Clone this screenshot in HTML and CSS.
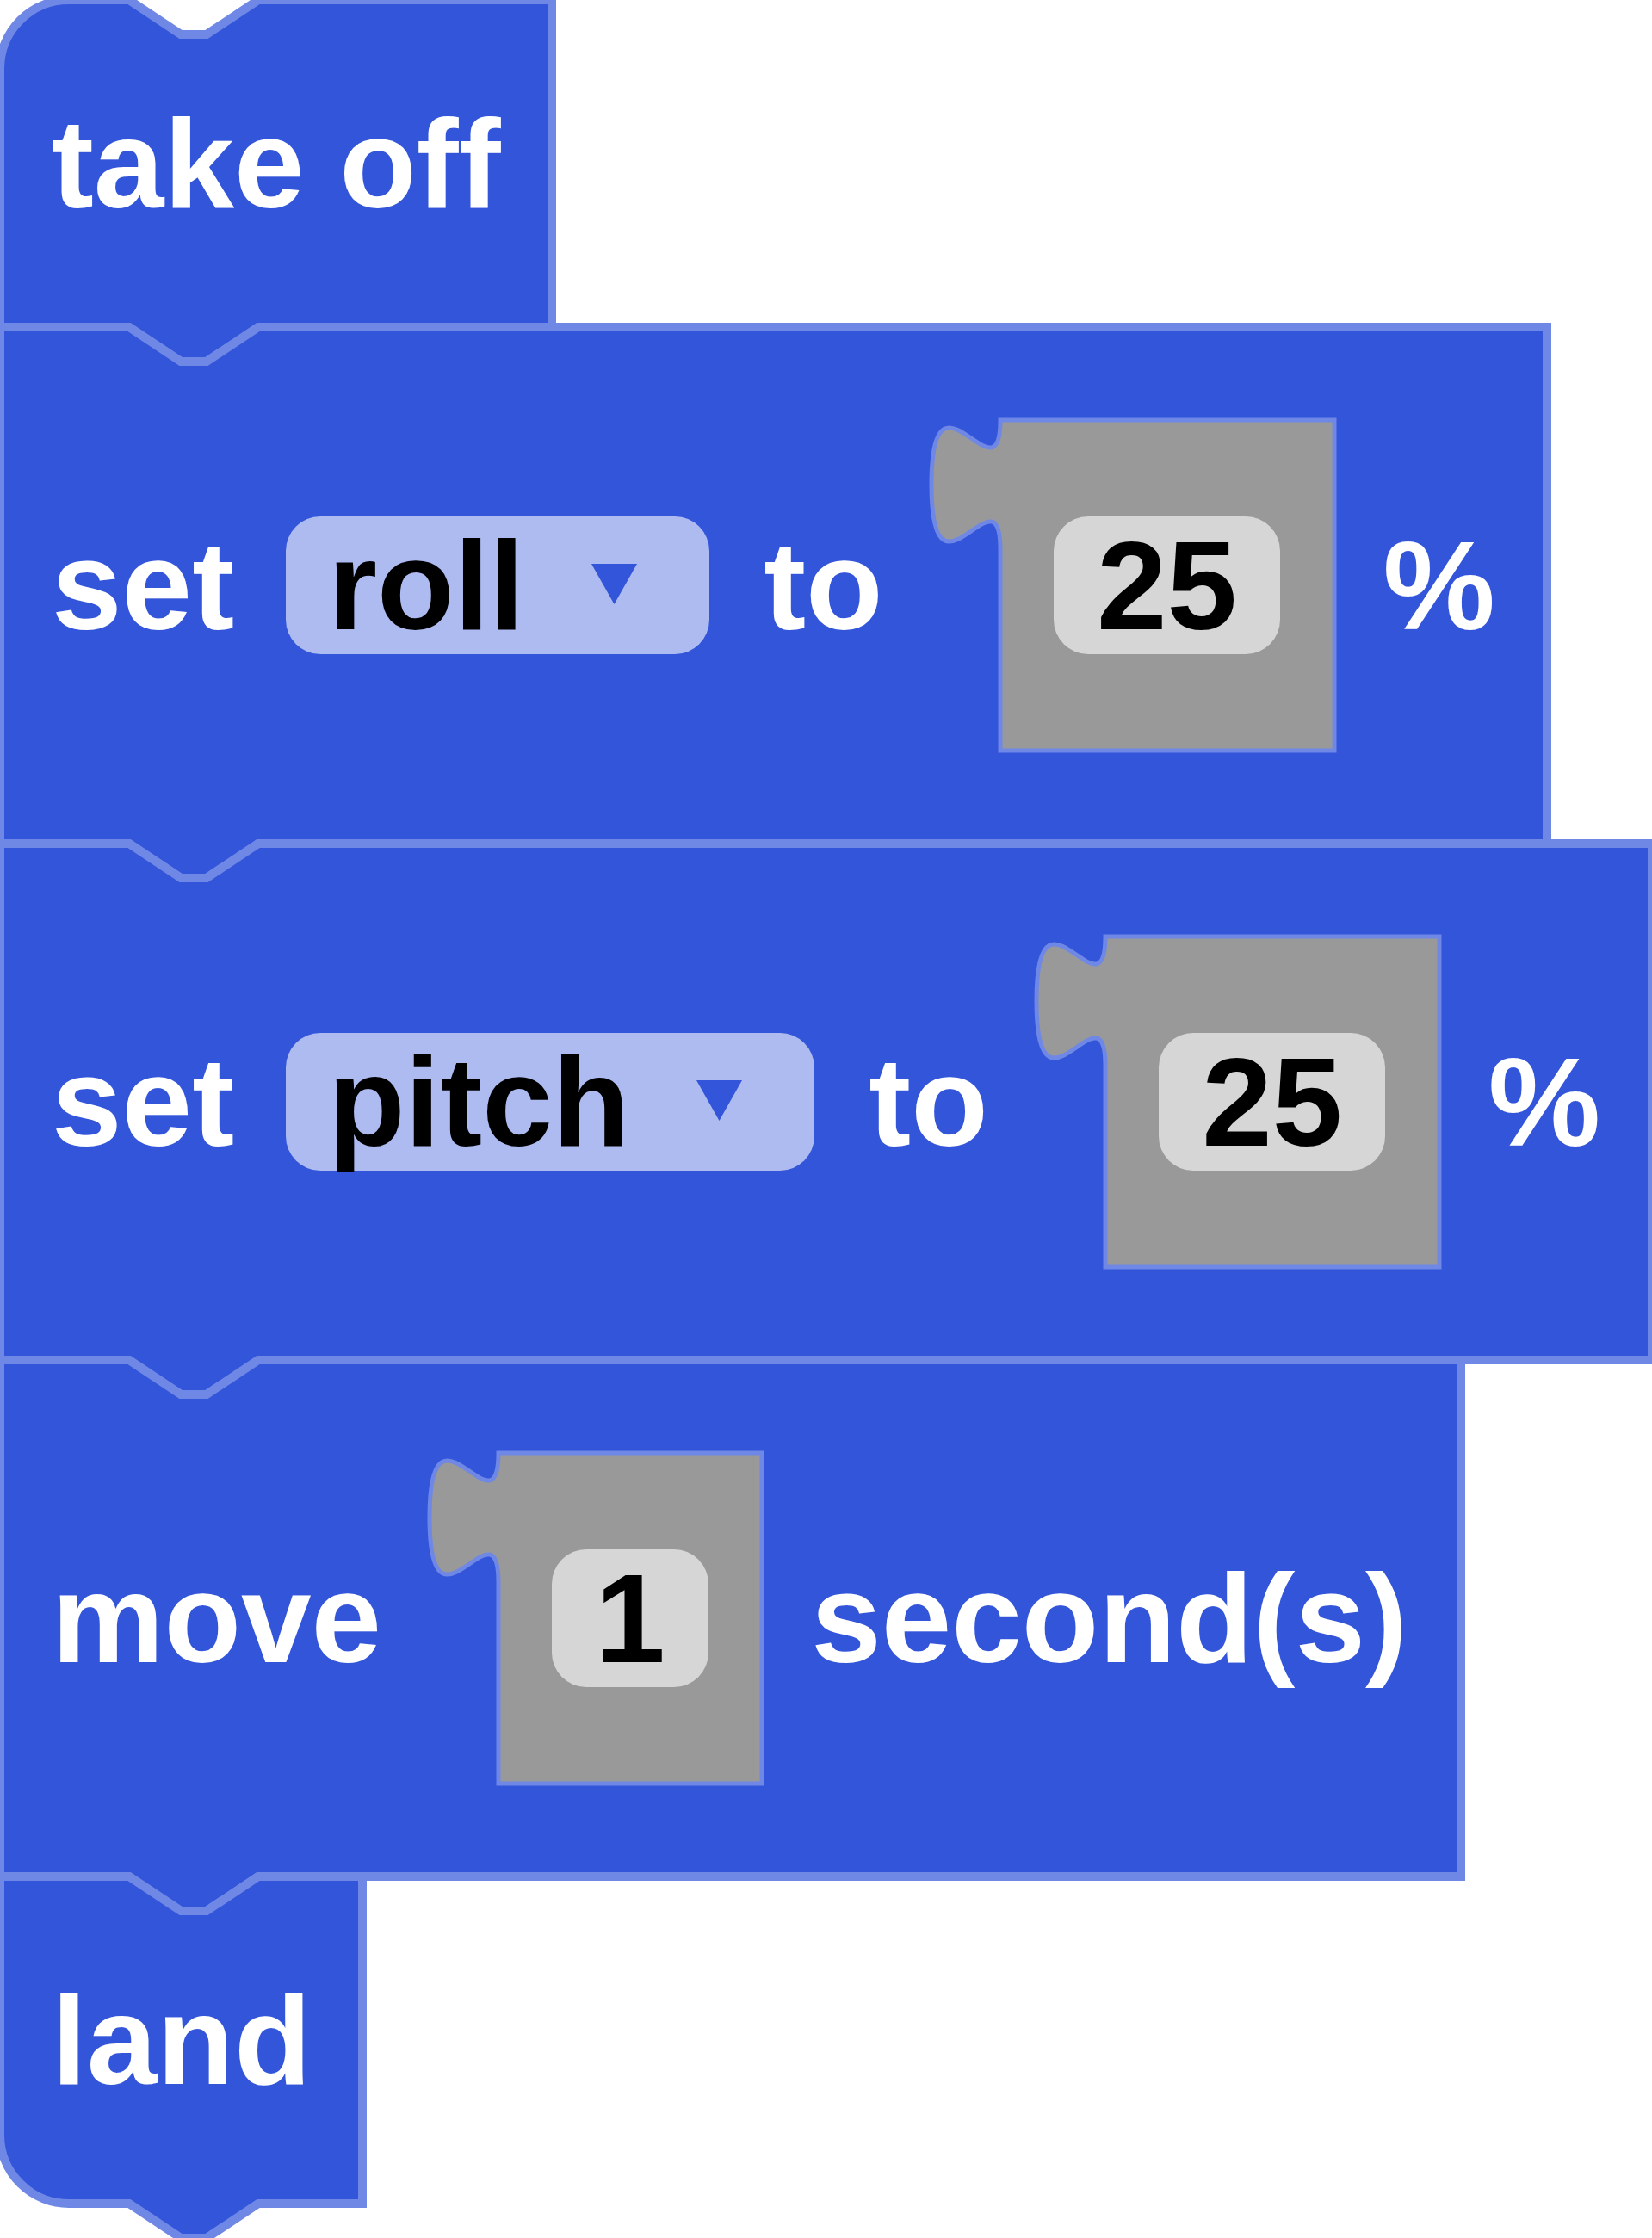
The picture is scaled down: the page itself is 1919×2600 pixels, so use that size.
FILE: index.html
```html
<!DOCTYPE html>
<html lang="en">
<head>
<meta charset="utf-8">
<title>Drone program blocks</title>
<link rel="stylesheet" href="styles.css">
</head>
<body>
<main class="stack">

  <div class="block block-short w-takeoff">
    <svg class="shape" width="641" height="380"><path d="M0,80 A80,80 0 0 1 80,0 H150 L210,40 H240 L300,0 H641 V380 H300 L240,420 H210 L150,380 H0 Z"/></svg>
    <span class="label">take off</span>
  </div>

  <div class="block block-tall w-roll">
    <svg class="shape" width="1797" height="600"><path d="M0,0 H150 L210,40 H240 L300,0 H1797 V600 H300 L240,640 H210 L150,600 H0 Z"/></svg>
    <span class="label">set</span>
    <span class="dropdown"><span class="dd-text">roll</span><svg class="dd-arrow" width="53" height="47" viewBox="0 0 53 47"><path d="M0,0 H53 L26.5,47 Z"/></svg></span>
    <span class="label">to</span>
    <span class="shadow shadow-2d">
      <svg class="shadow-shape" width="388" height="384"><path d="M0,0 H388 V384 H0 V150 c0,-100 -80,80 -80,-75 s80,25 80,-75 Z"/></svg>
      <span class="num">25</span>
    </span>
    <span class="label">%</span>
  </div>

  <div class="block block-tall w-pitch">
    <svg class="shape" width="1919" height="600"><path d="M0,0 H150 L210,40 H240 L300,0 H1919 V600 H300 L240,640 H210 L150,600 H0 Z"/></svg>
    <span class="label">set</span>
    <span class="dropdown"><span class="dd-text">pitch</span><svg class="dd-arrow" width="53" height="47" viewBox="0 0 53 47"><path d="M0,0 H53 L26.5,47 Z"/></svg></span>
    <span class="label">to</span>
    <span class="shadow shadow-2d">
      <svg class="shadow-shape" width="388" height="384"><path d="M0,0 H388 V384 H0 V150 c0,-100 -80,80 -80,-75 s80,25 80,-75 Z"/></svg>
      <span class="num">25</span>
    </span>
    <span class="label">%</span>
  </div>

  <div class="block block-tall w-move">
    <svg class="shape" width="1697" height="600"><path d="M0,0 H150 L210,40 H240 L300,0 H1697 V600 H300 L240,640 H210 L150,600 H0 Z"/></svg>
    <span class="label">move</span>
    <span class="shadow shadow-1d">
      <svg class="shadow-shape" width="306" height="384"><path d="M0,0 H306 V384 H0 V150 c0,-100 -80,80 -80,-75 s80,25 80,-75 Z"/></svg>
      <span class="num">1</span>
    </span>
    <span class="label">second(s)</span>
  </div>

  <div class="block block-short w-land">
    <svg class="shape" width="421" height="380"><path d="M0,0 H150 L210,40 H240 L300,0 H421 V380 H300 L240,420 H210 L150,380 H80 A80,80 0 0 1 0,300 Z"/></svg>
    <span class="label">land</span>
  </div>

</main>
</body>
</html>
```

FILE: styles.css
```css
html {
  overflow: hidden;
  background: #ffffff;
}

body {
  margin: 0;
  padding: 0;
  font-family: "Liberation Sans", Arial, sans-serif;
  font-weight: 700;
  font-size: 146.67px;
  line-height: 160px;
}

.stack {
  display: flex;
  flex-direction: column;
  align-items: flex-start;
  padding-bottom: 40px;
}

.block {
  position: relative;
  display: flex;
  align-items: center;
  box-sizing: border-box;
  padding-left: 60px;
  flex: none;
}

.block-short { height: 380px; }
.block-tall { height: 600px; }

.w-takeoff { width: 641px; }
.w-roll { width: 1797px; }
.w-pitch { width: 1919px; }
.w-move { width: 1697px; }
.w-land { width: 421px; }

.shape {
  position: absolute;
  left: 0;
  top: 0;
  overflow: visible;
}

.shape path {
  fill: #3355da;
  stroke: #7088e5;
  stroke-width: 10;
}

.label {
  position: relative;
  color: #ffffff;
  white-space: pre;
}

.dropdown {
  position: relative;
  display: flex;
  align-items: center;
  height: 160px;
  box-sizing: border-box;
  padding: 0 84px 0 49px;
  margin: 0 63px 0 60px;
  border-radius: 40px;
  background: #adbbf0;
  color: #000000;
  white-space: pre;
}

.dd-arrow {
  display: block;
  margin: 0 0 3px 78px;
  fill: #3355da;
}

.shadow {
  position: relative;
  display: flex;
  align-items: center;
  justify-content: center;
  height: 384px;
  margin: 0 57px 0 136px;
  flex: none;
}

.shadow-2d { width: 388px; }
.shadow-1d { width: 306px; }

.shadow-shape {
  position: absolute;
  left: 0;
  top: 0;
  overflow: visible;
}

.shadow-shape path {
  fill: #999999;
  stroke: #7088e5;
  stroke-width: 5;
}

.num {
  position: relative;
  height: 160px;
  padding: 0 50px;
  border-radius: 40px;
  background: #d6d6d6;
  color: #000000;
}
```
